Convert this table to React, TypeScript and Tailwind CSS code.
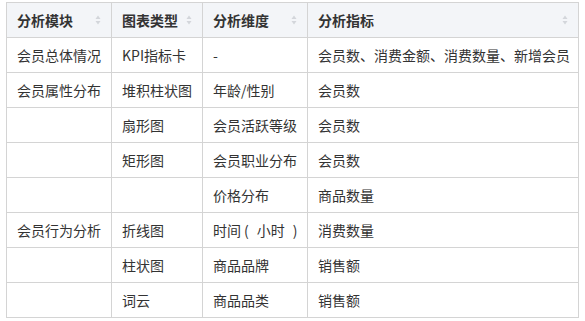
import React from "react";

const rows: React.ReactNode[][] = [
  ["会员总体情况", "KPI指标卡", "-", "会员数、消费金额、消费数量、新增会员"],
  ["会员属性分布", "堆积柱状图", "年龄/性别", "会员数"],
  ["", "扇形图", "会员活跃等级", "会员数"],
  ["", "矩形图", "会员职业分布", "会员数"],
  ["", "", "价格分布", "商品数量"],
  [
    "会员行为分析",
    "折线图",
    <>
      时间<span className="ml-[3px] mr-[8px]">(</span>小时
      <span className="ml-[8px]">)</span>
    </>,
    "消费数量",
  ],
  ["", "柱状图", "商品品牌", "销售额"],
  ["", "词云", "商品品类", "销售额"],
];

const heads = ["分析模块", "图表类型", "分析维度", "分析指标"];

const SortIcon = () => (
  <svg width="6" height="10" viewBox="0 0 6 10" className="shrink-0">
    <path d="M3 0.5 L5.5 4 L0.5 4 Z" fill="#d3d6db" />
    <path d="M3 9.5 L5.5 6 L0.5 6 Z" fill="#d3d6db" />
  </svg>
);

const App = () => {
  return (
    <div
      className="w-[585px] h-[321px] bg-white pl-[6px] pt-[2px]"
      style={{ fontFamily: '"Noto Sans CJK SC", "Noto Sans", sans-serif' }}
    >
      <table className="border-collapse table-fixed w-[572px] text-[14px] text-[#333]">
        <colgroup>
          <col className="w-[105px]" />
          <col className="w-[91px]" />
          <col className="w-[105px]" />
          <col className="w-[271px]" />
        </colgroup>
        <thead>
          <tr className="h-[35px] bg-[#f3f5f8]">
            {heads.map((h) => (
              <th key={h} className="border border-[#d4d4d4] px-[10px] text-left font-bold">
                <div className="flex items-center justify-between">
                  <span>{h}</span>
                  <SortIcon />
                </div>
              </th>
            ))}
          </tr>
        </thead>
        <tbody>
          {rows.map((r, i) => (
            <tr key={i} className="h-[35px]">
              {r.map((c, j) => (
                <td key={j} className="border border-[#d4d4d4] px-[10px] whitespace-nowrap">
                  {c}
                </td>
              ))}
            </tr>
          ))}
        </tbody>
      </table>
    </div>
  );
};

export default App;
